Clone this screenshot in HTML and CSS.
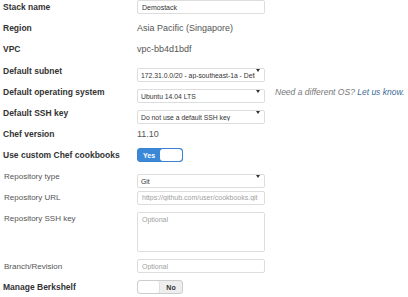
FILE: index.html
```html
<!DOCTYPE html>
<html lang="en">

<head>
    <meta charset="UTF-8">
    <meta name="viewport" content="width=device-width, initial-scale=1">
    <title>Add stack</title>
    <link rel="stylesheet" href="styles.css">
</head>

<body>
    <form class="stack-form">

        <div class="row">
            <label class="label">Stack name</label>
            <input class="field" type="text" value="Demostack">
        </div>

        <div class="row">
            <span class="label">Region</span>
            <span class="value">Asia Pacific (Singapore)</span>
        </div>

        <div class="row">
            <span class="label">VPC</span>
            <span class="value">vpc-bb4d1bdf</span>
        </div>

        <div class="row">
            <label class="label">Default subnet</label>
            <span class="select">
                <select>
                    <option>172.31.0.0/20 - ap-southeast-1a - Default</option>
                </select>
            </span>
        </div>

        <div class="row">
            <label class="label">Default operating system</label>
            <span class="select">
                <select>
                    <option>Ubuntu 14.04 LTS</option>
                </select>
            </span>
            <span class="help">Need a different OS? <a href="#">Let us know.</a></span>
        </div>

        <div class="row">
            <label class="label">Default SSH key</label>
            <span class="select">
                <select>
                    <option>Do not use a default SSH key</option>
                </select>
            </span>
        </div>

        <div class="row">
            <span class="label">Chef version</span>
            <span class="value">11.10</span>
        </div>

        <div class="row">
            <span class="label">Use custom Chef cookbooks</span>
            <span class="toggle toggle-on">
                <span class="toggle-text">Yes</span>
                <span class="toggle-knob"></span>
            </span>
        </div>

        <div class="row">
            <label class="label sub">Repository type</label>
            <span class="select">
                <select>
                    <option>Git</option>
                </select>
            </span>
        </div>

        <div class="row">
            <label class="label sub">Repository URL</label>
            <input class="field" type="text" placeholder="https://github.com/user/cookbooks.git">
        </div>

        <div class="row row-top">
            <label class="label sub">Repository SSH key</label>
            <textarea class="field area" placeholder="Optional"></textarea>
        </div>

        <div class="row">
            <label class="label sub">Branch/Revision</label>
            <input class="field" type="text" placeholder="Optional">
        </div>

        <div class="row">
            <span class="label">Manage Berkshelf</span>
            <span class="toggle toggle-off">
                <span class="toggle-knob"></span>
                <span class="toggle-text">No</span>
            </span>
        </div>

    </form>
</body>

</html>
```

FILE: styles.css
```css
/* Base */
* {
    margin: 0;
    padding: 0;
    box-sizing: border-box;
}

body {
    font-family: "Liberation Sans", Arial, sans-serif;
    background: #ffffff;
    color: #333333;
}

/* Form rows */
.stack-form {
    display: flex;
    flex-direction: column;
    gap: 7.2px;
}

.row {
    display: flex;
    align-items: center;
    min-height: 14px;
}

.row-top {
    align-items: flex-start;
}

.row-top .label {
    padding-top: 2px;
}

.label {
    flex: 0 0 137px;
    padding-left: 3px;
    font-size: 8.5px;
    font-weight: bold;
    color: #333333;
}

.label.sub {
    padding-left: 4px;
    font-size: 8px;
    font-weight: normal;
    color: #555555;
}

.value {
    font-size: 9px;
    color: #555555;
}

/* Inputs */
.field {
    width: 128px;
    height: 14px;
    padding: 0 4px;
    border: 1px solid #dddddd;
    border-radius: 2px;
    background: #ffffff;
    font-family: inherit;
    font-size: 7px;
    color: #333333;
    outline: none;
}

.field::placeholder {
    color: #a0a0a0;
}

.area {
    height: 40px;
    padding-top: 3px;
    resize: none;
}

.select {
    position: relative;
    display: block;
    width: 128px;
    height: 14px;
}

.select select {
    appearance: none;
    width: 100%;
    height: 14px;
    padding: 0 9px 0 3px;
    border: 1px solid #dddddd;
    border-radius: 2px;
    background: #ffffff;
    font-family: inherit;
    font-size: 6.8px;
    color: #333333;
    outline: none;
}

.select::after {
    content: "";
    position: absolute;
    right: 5px;
    top: 5px;
    border-left: 2px solid transparent;
    border-right: 2px solid transparent;
    border-top: 3px solid #333333;
    pointer-events: none;
}

.help {
    margin-left: 10px;
    font-size: 8.5px;
    font-style: italic;
    color: #777777;
    white-space: nowrap;
}

.help a {
    color: #3d6d99;
    text-decoration: none;
}

/* Toggles */
.toggle {
    display: flex;
    width: 46px;
    height: 14px;
    border-radius: 3px;
    overflow: hidden;
}

.toggle-text {
    flex: 1;
    display: flex;
    align-items: center;
    justify-content: center;
    font-size: 7px;
    font-weight: bold;
}

.toggle-knob {
    width: 22px;
    background: #ffffff;
    border-radius: 3px;
}

.toggle-on {
    border: 1px solid #3b82d0;
    background: #3b88d8;
}

.toggle-on .toggle-text {
    color: #ffffff;
}

.toggle-off {
    border: 1px solid #cccccc;
    background: #eeeeee;
}

.toggle-off .toggle-knob {
    border-right: 1px solid #dddddd;
}

.toggle-off .toggle-text {
    color: #333333;
}
```
